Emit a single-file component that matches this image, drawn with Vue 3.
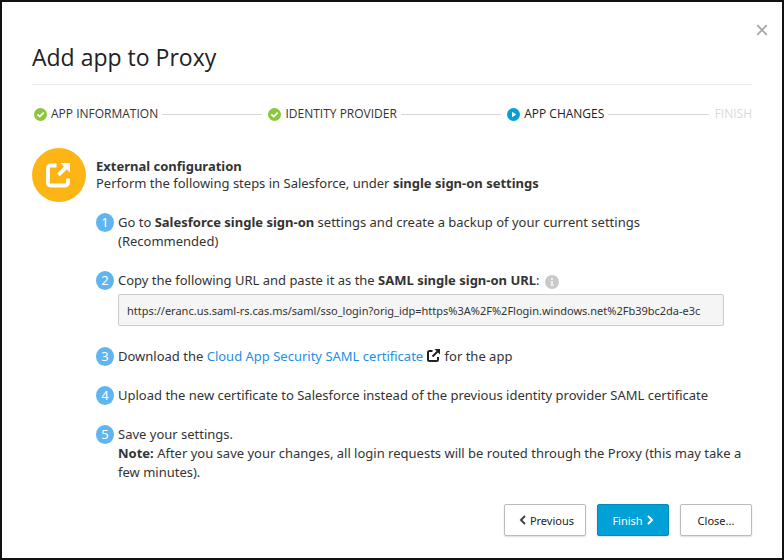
<script setup>
import { ref } from 'vue'

const wizard = [
  { label: 'APP INFORMATION', state: 'done' },
  { label: 'IDENTITY PROVIDER', state: 'done' },
  { label: 'APP CHANGES', state: 'current' },
  { label: 'FINISH', state: 'pending' },
]
const ssoUrl = ref('https://eranc.us.saml-rs.cas.ms/saml/sso_login?orig_idp=https%3A%2F%2Flogin.windows.net%2Fb39bc2da-e3c')
</script>

<template>
  <main class="dialog" role="dialog" aria-labelledby="dialog-title">
    <header class="header">
      <h1 id="dialog-title">Add app to Proxy</h1>
      <button class="dismiss" type="button" aria-label="Close dialog">
        <svg width="12" height="12" viewBox="0 0 12 12"><path d="M1.2 1.2l9.6 9.6M10.8 1.2L1.2 10.8" stroke="#a6a6a6" stroke-width="1.7" fill="none" /></svg>
      </button>
    </header>

    <ol class="wizard">
      <li v-for="item in wizard" :key="item.label" :class="item.state">
        <svg v-if="item.state === 'done'" width="13" height="13" viewBox="0 0 13 13">
          <circle cx="6.5" cy="6.5" r="6.5" fill="#8cc63f" />
          <path d="M3.4 6.3l2.3 2.3 4-4" stroke="#fff" stroke-width="1.7" fill="none" />
        </svg>
        <svg v-else-if="item.state === 'current'" width="13" height="13" viewBox="0 0 13 13">
          <circle cx="6.5" cy="6.5" r="6.5" fill="#00a1d6" />
          <path d="M5 3.8l4.2 2.7L5 9.2z" fill="#fff" />
        </svg>
        <span>{{ item.label }}</span>
      </li>
    </ol>

    <section class="content">
      <div class="badge">
        <svg width="26" height="26" viewBox="0 0 26 26" fill="none" stroke="#fff">
          <path d="M10.5 3.5H4.5a2.5 2.5 0 0 0-2.5 2.5v15a2.500 2.500 0 0 0 2.500 2.500h15a2.500 2.500 0 0 0 2.500-2.500v-4.500" stroke-width="3.800" />
          <path d="M12.500 12.800l7.500-7.500" stroke-width="3.800" />
          <path d="M14.500 1H24v9.500z" fill="#fff" stroke="none" />
        </svg>
      </div>
      <div class="body">
        <h2>External configuration</h2>
        <p class="intro">Perform the following steps in Salesforce, under <b>single sign-on settings</b></p>
        <ol class="tasks">
          <li>
            <span class="num">1</span>
            <p>Go to <b>Salesforce single sign-on</b> settings and create a backup of your current settings<br>(Recommended)</p>
          </li>
          <li>
            <span class="num">2</span>
            <div class="field">
              <label for="sso-url">Copy the following URL and paste it as the <b>SAML single sign-on URL</b>:
                <svg class="info" width="14" height="14" viewBox="0 0 14 14">
                  <circle cx="7" cy="7" r="7" fill="#c9c9c9" />
                  <path d="M6 3h2v2H6zM5.500 6H8v4h1v1H5.500v-1H6V7h-.5z" fill="#ededed" />
                </svg>
              </label>
              <input id="sso-url" type="text" readonly :value="ssoUrl">
            </div>
          </li>
          <li>
            <span class="num">3</span>
            <p>Download the <a href="#certificate">Cloud App Security SAML certificate</a>
              <svg class="external" width="13" height="13" viewBox="0 0 13 13" fill="none" stroke="#222">
                <path d="M5.500 2H2.500Q1 2 1 3.500v7Q1 12 2.500 12h7q1.500 0 1.500-1.500V8" stroke-width="2" />
                <path d="M5.500 7.500l5-5" stroke-width="2" />
                <path d="M7.500 0H13v5.500z" fill="#222" stroke="none" />
              </svg>
              for the app</p>
          </li>
          <li>
            <span class="num">4</span>
            <p>Upload the new certificate to Salesforce instead of the previous identity provider SAML certificate</p>
          </li>
          <li>
            <span class="num">5</span>
            <p>Save your settings.<br><b>Note:</b> After you save your changes, all login requests will be routed through the Proxy (this may take a<br>few minutes).</p>
          </li>
        </ol>
      </div>
    </section>

    <footer class="actions">
      <button type="button" class="btn previous">
        <svg width="7" height="10" viewBox="0 0 7 10"><path d="M6 1L2 5l4 4" stroke="#444" stroke-width="2" fill="none" /></svg>
        Previous
      </button>
      <button type="button" class="btn primary">
        Finish
        <svg width="7" height="10" viewBox="0 0 7 10"><path d="M1 1l4 4-4 4" stroke="#fff" stroke-width="2" fill="none" /></svg>
      </button>
      <button type="button" class="btn">Close...</button>
    </footer>
  </main>
</template>

<style>
body { background: #fff; }
</style>

<style scoped>
* { box-sizing: border-box; }
h1, h2, p, ol { margin: 0; padding: 0; }
ol { list-style: none; }
button, input { font-family: inherit; }
svg { flex: none; }
.dialog {
  min-height: 100vh;
  padding: 37px 30px 22px;
  border: 2px solid #111;
  background: #fff;
  color: #333;
  font: 13px/19px "Noto Sans", "Open Sans", sans-serif;
}
.header {
  position: relative;
  padding-bottom: 9px;
  border-bottom: 1px solid #e9e9e9;
}
h1 {
  color: #222;
  font-family: "Open Sans", sans-serif;
  font-size: 23px;
  font-weight: 400;
  line-height: 36px;
}
.dismiss {
  position: absolute;
  top: -17px;
  right: -18px;
  display: flex;
  padding: 2px;
  border: 0;
  background: none;
}
.wizard {
  display: flex;
  margin-top: 19px;
  padding-left: 2px;
  font-family: "Open Sans", sans-serif;
  font-size: 12px;
  line-height: 20px;
}
.wizard li {
  display: flex;
  flex: 1 1 auto;
  align-items: center;
  gap: 4px;
}
.wizard li:not(:last-child)::after {
  content: "";
  flex: 1 1 0;
  height: 1px;
  margin-right: 6px;
  background: #d6d6d6;
}
.wizard li:last-child { flex: none; }
.wizard .current { color: #222; }
.wizard .pending { color: #d9d9d9; }
.content {
  display: flex;
  gap: 10px;
  margin-top: 24px;
}
.badge {
  display: flex;
  flex: none;
  align-items: center;
  justify-content: center;
  width: 54px;
  height: 54px;
  border-radius: 50%;
  background: #fdb515;
}
.body {
  flex: 1;
  min-width: 0;
  padding-top: 9px;
}
h2 {
  font-size: 13px;
  line-height: 18px;
}
.intro { line-height: 17px; }
.tasks {
  display: grid;
  gap: 20px;
  margin-top: 21px;
}
.tasks li {
  display: flex;
  gap: 4px;
}
.tasks p { white-space: nowrap; }
.num {
  flex: none;
  width: 18px;
  height: 19px;
  border-radius: 50%;
  background: #60b5f0;
  color: #fff;
  text-align: center;
}
.field {
  flex: 1;
  margin-right: 28px;
}
.field label { display: block; }
.field input {
  display: block;
  width: 100%;
  height: 32px;
  margin: 4px 0 1px;
  padding: 0 8px;
  border: 1px solid #ccc;
  border-radius: 2px;
  background: #f5f5f5;
  color: #333;
  font-size: 11px;
}
.info {
  margin-left: 2px;
  vertical-align: -4px;
}
.external {
  margin: 0 1px 0 4px;
  vertical-align: -1px;
}
a {
  color: #2490e0;
  text-decoration: none;
}
.actions {
  display: flex;
  justify-content: flex-end;
  gap: 11px;
  margin-top: 22px;
}
.btn {
  display: flex;
  align-items: center;
  justify-content: center;
  gap: 4px;
  min-width: 72px;
  height: 32px;
  padding: 0 11px;
  border: 1px solid #bbb;
  border-radius: 2px;
  background: #fff;
  box-shadow: 0 1px 2px #0002;
  color: #222;
  font-size: 11px;
}
.previous { padding-left: 14px; }
.primary {
  border-color: #078ab8;
  background: #00a1d6;
  color: #fff;
}
</style>
